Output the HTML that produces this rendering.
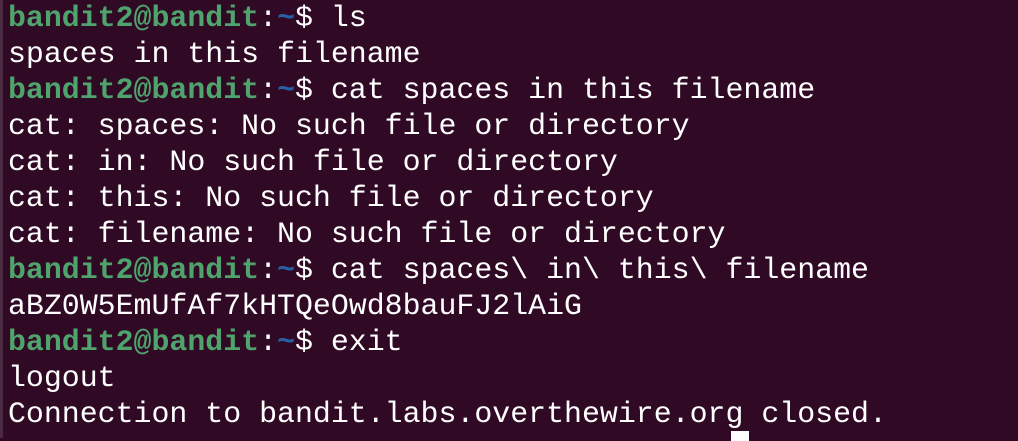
<!DOCTYPE html>
<html><head><style>
html,body{margin:0;padding:0;}
body{width:1018px;height:438px;background:#300a24;overflow:hidden;position:relative;border-left:3px solid #4a2a40;box-sizing:border-box;}
pre{margin:0;position:absolute;left:5px;top:0;font-family:"Liberation Mono",monospace;font-size:29.9px;line-height:36px;color:#ffffff;white-space:pre;}
.g{color:#4fa36c;font-weight:bold;}
.b{color:#2a5fa8;font-weight:bold;}
.cur{position:absolute;left:728px;top:431px;width:18px;height:10px;background:#fff;}
</style></head><body>
<pre><span class="g">bandit2@bandit</span>:<span class="b">~</span>$ ls
spaces in this filename
<span class="g">bandit2@bandit</span>:<span class="b">~</span>$ cat spaces in this filename
cat: spaces: No such file or directory
cat: in: No such file or directory
cat: this: No such file or directory
cat: filename: No such file or directory
<span class="g">bandit2@bandit</span>:<span class="b">~</span>$ cat spaces\ in\ this\ filename
aBZ0W5EmUfAf7kHTQeOwd8bauFJ2lAiG
<span class="g">bandit2@bandit</span>:<span class="b">~</span>$ exit
logout
Connection to bandit.labs.overthewire.org closed.</pre>
<div class="cur"></div>
</body></html>
